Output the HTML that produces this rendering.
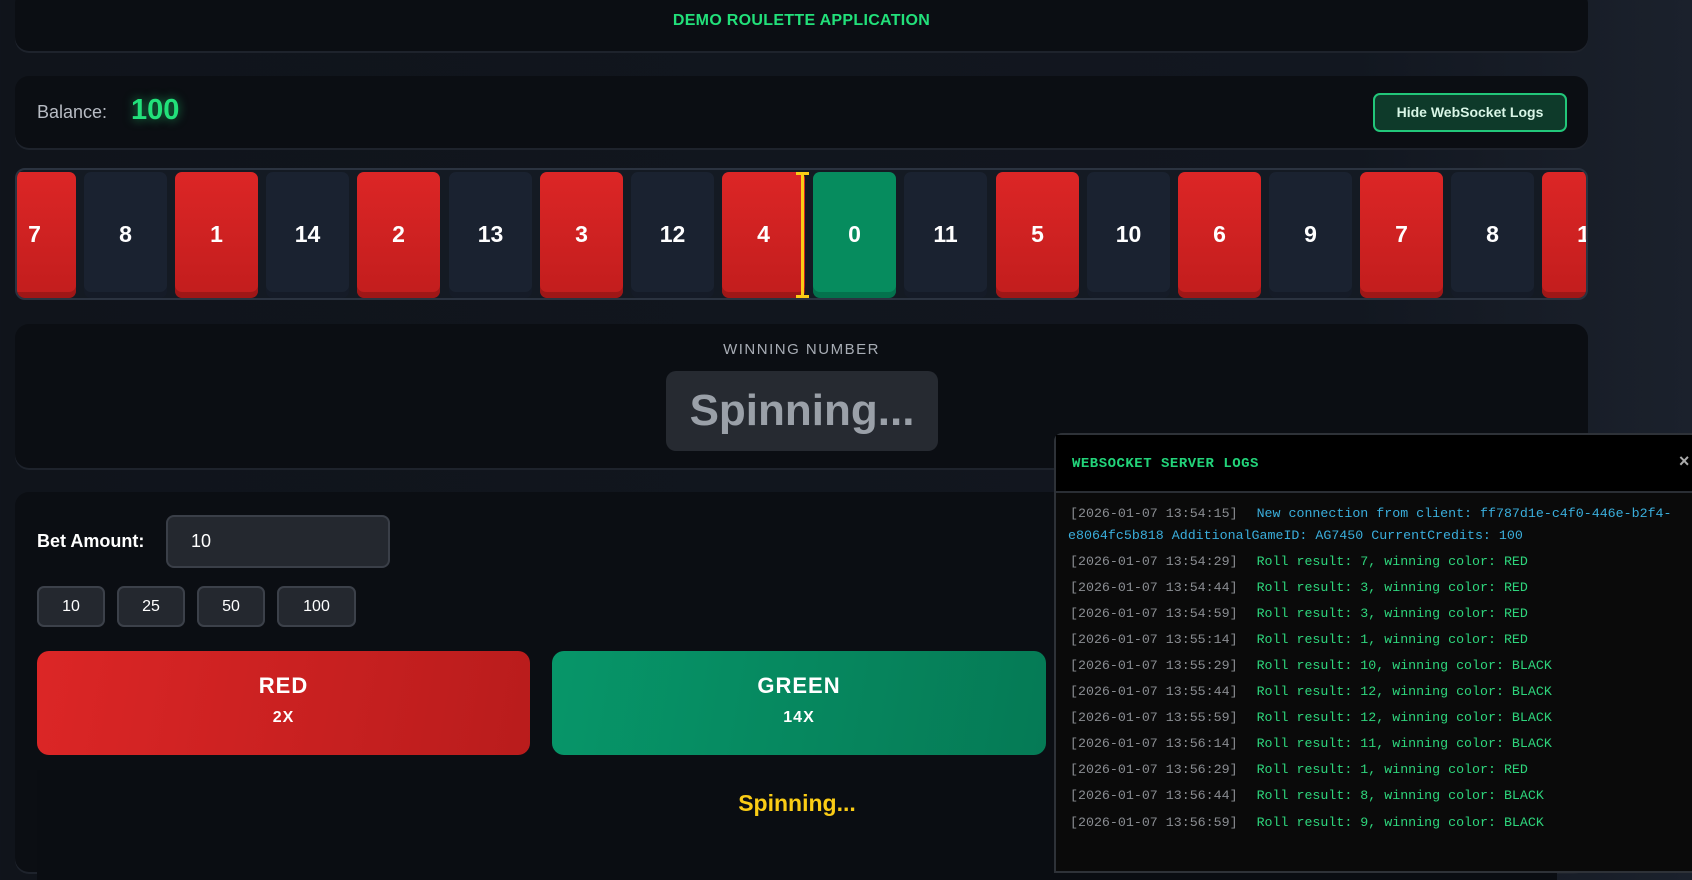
<!DOCTYPE html>
<html><head><meta charset="utf-8"><style>
*{box-sizing:border-box;margin:0;padding:0}
body{width:1692px;height:844px;overflow:hidden;background:linear-gradient(90deg,#10141b 0%,#121720 80%,#1b212c 100%);font-family:"Liberation Sans",sans-serif;color:#fff;position:relative}
.card{position:absolute;left:15px;width:1573px;background:#0b0e13;border-radius:14px;box-shadow:0 2px 0 #1e232c}
.title{top:-10px;height:61px;text-align:center;color:#22e07a;font-weight:bold;font-size:16px;letter-spacing:.3px;padding-top:22px}
.bal{top:76px;height:72px}
.bal .l{position:absolute;left:22px;top:26px;color:#b8bcc4;font-size:18px}
.bal .v{position:absolute;left:116px;top:18px;color:#22e07a;font-size:29px;font-weight:bold;text-shadow:0 0 10px rgba(34,224,122,.6)}
.btn{position:absolute;left:1358px;top:17px;width:194px;height:39px;border:2px solid #22c77a;border-radius:7px;background:#0e3a2a;color:#d8f5e6;font-size:14px;font-weight:bold;text-align:center;line-height:35px}
.wheel{position:absolute;left:15px;top:168px;width:1573px;height:132px;background:#141a23;border:2px solid #2b3340;border-radius:10px;overflow:hidden}
.t{position:absolute;top:2px;width:83px;height:126px;border-radius:7px;font-weight:bold;font-size:23px;text-align:center;line-height:124px;box-shadow:inset 0 -6px 0 rgba(0,0,0,.18)}
.r{background:linear-gradient(180deg,#dc2626,#c21d1d)}
.b{background:#1a2230}
.g{background:#068c5e}
.mk{position:absolute;left:784px;top:2px;width:3px;height:126px;background:#facc15}
.mk:before,.mk:after{content:"";position:absolute;left:-5px;width:13px;height:3px;background:#facc15}
.mk:before{top:0}.mk:after{bottom:0}
.win{top:324px;height:144px;text-align:center}
.win .h{margin-top:17px;color:#a8adb5;font-size:15px;letter-spacing:1.5px}
.win .s{position:absolute;left:651px;top:47px;width:272px;height:80px;background:#262a31;border-radius:10px;color:#9aa0a8;font-weight:bold;font-size:44px;line-height:80px}
.bet{top:492px;height:380px}
.lab{position:absolute;left:22px;top:39px;font-weight:bold;font-size:18px}
.inp{position:absolute;left:151px;top:23px;width:224px;height:53px;background:#24282f;border:2px solid #3a3f48;border-radius:8px;font-size:18px;padding:14px 0 0 23px}
.chip{position:absolute;top:94px;height:41px;background:#24282f;border:2px solid #3c414a;border-radius:7px;font-size:16px;text-align:center;line-height:37px}
.big{position:absolute;top:159px;height:104px;border-radius:12px;text-align:center;font-weight:bold}
.big .a{font-size:22px;margin-top:22px;letter-spacing:1px}
.big .x{font-size:16px;margin-top:10px;letter-spacing:1px}
.stat{position:absolute;left:22px;top:278px;width:1520px;height:110px;background:#0a0d12;text-align:center;color:#facc15;font-weight:bold;font-size:23px;padding-top:20px}
.logs{position:absolute;left:1054px;top:433px;width:660px;height:440px;background:#0a0a0a;border:2px solid #2e3238;border-radius:8px 0 0 0;font-family:"Liberation Mono",monospace}
.lh{height:58px;background:#000;border-bottom:2px solid #2a2e34;color:#22d47a;font-weight:bold;font-size:14px;padding:21px 0 0 16px;letter-spacing:.5px;position:relative}
.lh span{position:absolute;right:22px;top:18px;color:#aaa;font-size:18px}
.lb{padding:10px 0 0 14px;font-size:13.3px;line-height:21.5px}
.ln{margin-bottom:4.6px}
.ts{color:#8a8d92}
.m{color:#2ed57c;margin-left:19px}
.c{color:#3aaedc}
</style></head><body>
<div class="card title">DEMO ROULETTE APPLICATION</div>
<div class="card bal"><div class="l">Balance:</div><div class="v">100</div><div class="btn">Hide WebSocket Logs</div></div>
<div class="wheel">
<div class="t r" style="left:-24px">7</div>
<div class="t b" style="left:67px">8</div>
<div class="t r" style="left:158px">1</div>
<div class="t b" style="left:249px">14</div>
<div class="t r" style="left:340px">2</div>
<div class="t b" style="left:432px">13</div>
<div class="t r" style="left:523px">3</div>
<div class="t b" style="left:614px">12</div>
<div class="t r" style="left:705px">4</div>
<div class="t g" style="left:796px">0</div>
<div class="t b" style="left:887px">11</div>
<div class="t r" style="left:979px">5</div>
<div class="t b" style="left:1070px">10</div>
<div class="t r" style="left:1161px">6</div>
<div class="t b" style="left:1252px">9</div>
<div class="t r" style="left:1343px">7</div>
<div class="t b" style="left:1434px">8</div>
<div class="t r" style="left:1525px">1</div>
<div class="mk"></div>
</div>
<div class="card win"><div class="h">WINNING NUMBER</div><div class="s">Spinning...</div></div>
<div class="card bet">
<div class="lab">Bet Amount:</div><div class="inp">10</div>
<div class="chip" style="left:22px;width:68px">10</div>
<div class="chip" style="left:102px;width:68px">25</div>
<div class="chip" style="left:182px;width:68px">50</div>
<div class="chip" style="left:262px;width:79px">100</div>
<div class="big" style="left:22px;width:493px;background:linear-gradient(100deg,#dc2626,#b91c1c)"><div class="a">RED</div><div class="x">2X</div></div>
<div class="big" style="left:537px;width:494px;background:linear-gradient(100deg,#079669,#057a55)"><div class="a">GREEN</div><div class="x">14X</div></div>
<div class="stat">Spinning...</div>
</div>
<div class="logs">
<div class="lh">WEBSOCKET SERVER LOGS<span>×</span></div>
<div class="lb">
<div class="ln"><span class="ts">[2026-01-07 13:54:15]</span><span class="m c">New connection from client: ff787d1e-c4f0-446e-b2f4-</span><br><span class="c" style="margin-left:-2px">e8064fc5b818 AdditionalGameID: AG7450 CurrentCredits: 100</span></div>
<div class="ln"><span class="ts">[2026-01-07 13:54:29]</span><span class="m">Roll result: 7, winning color: RED</span></div>
<div class="ln"><span class="ts">[2026-01-07 13:54:44]</span><span class="m">Roll result: 3, winning color: RED</span></div>
<div class="ln"><span class="ts">[2026-01-07 13:54:59]</span><span class="m">Roll result: 3, winning color: RED</span></div>
<div class="ln"><span class="ts">[2026-01-07 13:55:14]</span><span class="m">Roll result: 1, winning color: RED</span></div>
<div class="ln"><span class="ts">[2026-01-07 13:55:29]</span><span class="m">Roll result: 10, winning color: BLACK</span></div>
<div class="ln"><span class="ts">[2026-01-07 13:55:44]</span><span class="m">Roll result: 12, winning color: BLACK</span></div>
<div class="ln"><span class="ts">[2026-01-07 13:55:59]</span><span class="m">Roll result: 12, winning color: BLACK</span></div>
<div class="ln"><span class="ts">[2026-01-07 13:56:14]</span><span class="m">Roll result: 11, winning color: BLACK</span></div>
<div class="ln"><span class="ts">[2026-01-07 13:56:29]</span><span class="m">Roll result: 1, winning color: RED</span></div>
<div class="ln"><span class="ts">[2026-01-07 13:56:44]</span><span class="m">Roll result: 8, winning color: BLACK</span></div>
<div class="ln"><span class="ts">[2026-01-07 13:56:59]</span><span class="m">Roll result: 9, winning color: BLACK</span></div>
</div></div>
</body></html>
